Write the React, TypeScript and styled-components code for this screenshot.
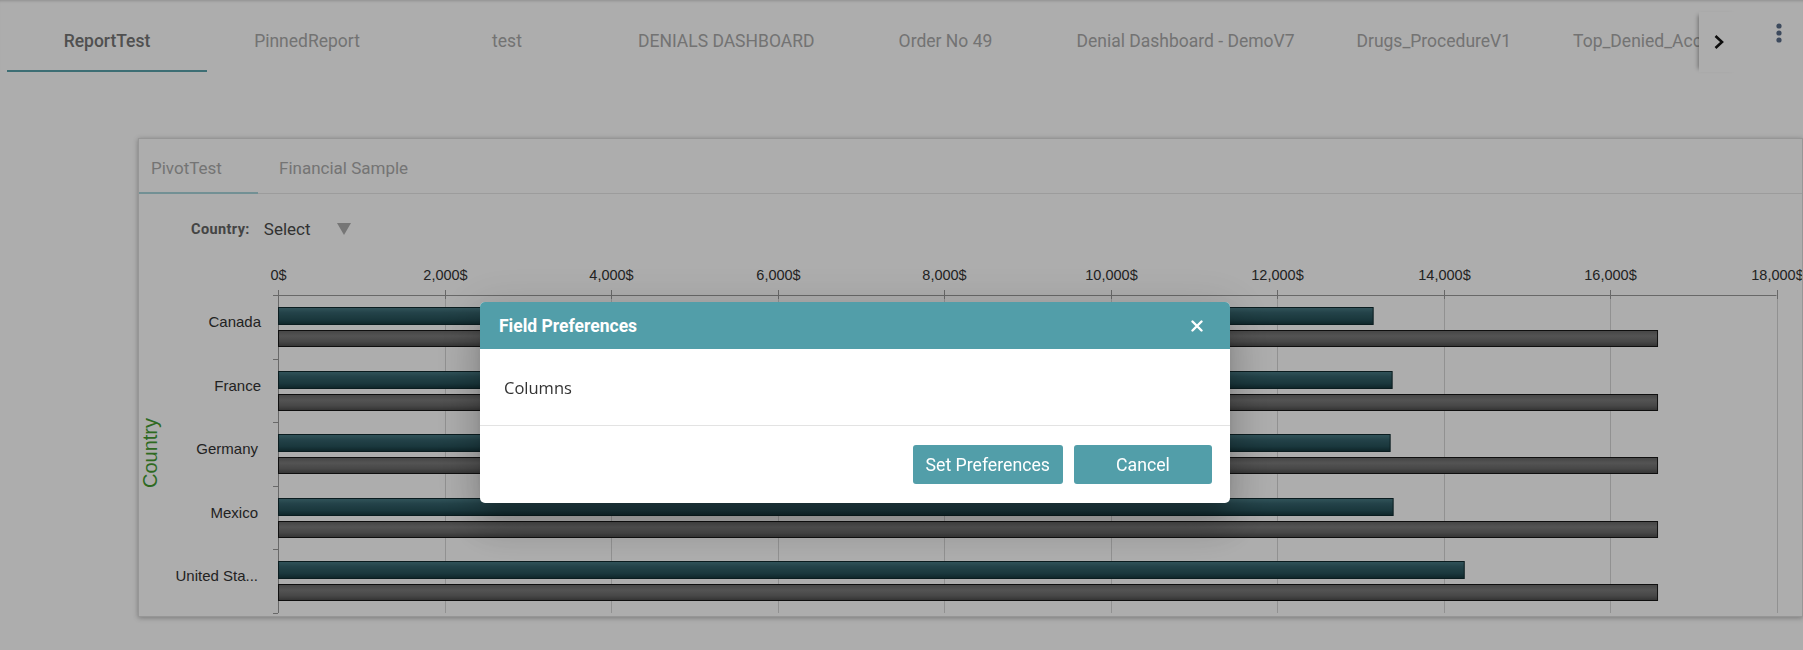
import React from "react";
import styled, { createGlobalStyle } from "styled-components";

const GlobalStyle = createGlobalStyle`
  html, body { margin: 0; padding: 0; background: #ffffff; overflow: hidden; }
  body { font-family: Roboto, "Noto Sans", Arial, sans-serif; }
  * { box-sizing: border-box; }
`;

const Page = styled.div`
  position: relative;
  width: 1803px;
  height: 650px;
  overflow: hidden;
  background: #ffffff;
`;

const Header = styled.header`
  display: flex;
  height: 72px;
  padding-left: 7px;
  box-shadow: inset 0 3px 3px -2px rgba(0, 0, 0, 0.18);
`;

const TabScroller = styled.nav`
  flex: none;
  display: flex;
  width: 1692px;
  height: 60px;
  margin-top: 12px;
  overflow: hidden;
`;

const TopTab = styled.div<{ $active?: boolean }>`
  flex: none;
  min-width: 200px;
  height: 60px;
  padding: 0 31px;
  display: flex;
  align-items: center;
  justify-content: center;
  white-space: nowrap;
  font-size: 17.5px;
  font-weight: ${(p) => (p.$active ? 500 : 400)};
  color: ${(p) => (p.$active ? "#767676" : "#aaaaaa")};
  border-bottom: 2px solid ${(p) => (p.$active ? "#5aa2ab" : "transparent")};
`;

const Paginator = styled.div`
  flex: none;
  width: 40px;
  height: 60px;
  margin-top: 12px;
  display: flex;
  align-items: center;
  justify-content: center;
  box-shadow: -4px 0 4px -3px rgba(0, 0, 0, 0.35);
`;

const Kebab = styled.div`
  flex: none;
  width: 40px;
  height: 40px;
  margin: 13px 0 0 20px;
  display: flex;
  align-items: center;
  justify-content: center;
`;

const Panel = styled.section`
  margin: 66px 0 0 138px;
  width: 1665px;
  height: 479px;
  background: #ffffff;
  border: 1px solid #dedede;
  box-shadow: 0 1px 5px rgba(0, 0, 0, 0.3);
`;

const PanelTabs = styled.div`
  display: flex;
  height: 55px;
  border-bottom: 1px solid #e6e6e6;
`;

const PanelTab = styled.div<{ $active?: boolean; $width?: number; $padLeft: number }>`
  display: flex;
  align-items: center;
  width: ${(p) => (p.$width ? `${p.$width}px` : "auto")};
  padding: 4px 20px 0 ${(p) => p.$padLeft}px;
  font-size: 17px;
  color: #acacac;
  border-bottom: 2px solid ${(p) => (p.$active ? "#a9d4da" : "transparent")};
  margin-bottom: -1px;
`;

const FilterRow = styled.div`
  display: flex;
  align-items: center;
  height: 56px;
  padding: 14px 0 0 52px;
`;

const FilterLabel = styled.span`
  font-size: 14.5px;
  font-weight: 700;
  letter-spacing: 0.4px;
  color: #656565;
`;

const FilterValue = styled.span`
  margin-left: 14px;
  font-size: 17px;
  color: #4b4b4b;
`;

const Caret = styled.span`
  margin-left: 26px;
  display: flex;
  align-items: center;
`;

const ChartSvg = styled.svg`
  display: block;
`;

const Backdrop = styled.div`
  position: fixed;
  inset: 0;
  background: rgba(0, 0, 0, 0.32);
`;

const Dialog = styled.div`
  position: fixed;
  left: 480px;
  top: 302px;
  width: 750px;
  background: #ffffff;
  border-radius: 5px;
  overflow: hidden;
  box-shadow: 0 11px 15px -7px rgba(0, 0, 0, 0.2), 0 24px 38px 3px rgba(0, 0, 0, 0.14),
    0 9px 46px 8px rgba(0, 0, 0, 0.12);
`;

const DialogHeader = styled.div`
  display: flex;
  align-items: center;
  justify-content: space-between;
  height: 47px;
  padding: 0 27px 0 19px;
  background: #529ea9;
`;

const DialogTitle = styled.h2`
  margin: 0;
  font-size: 17.5px;
  font-weight: 700;
  color: #ffffff;
`;

const DialogBody = styled.div`
  display: flex;
  align-items: center;
  height: 77px;
  padding-left: 24px;
  border-bottom: 1px solid #e3e3e3;
  font-family: "Open Sans", Roboto, sans-serif;
  font-size: 16.5px;
  color: #333333;
`;

const DialogFooter = styled.div`
  display: flex;
  justify-content: flex-end;
  gap: 11px;
  padding: 19px 18px 19px;
`;

const DialogButton = styled.button`
  height: 39px;
  min-width: 138px;
  padding: 0 13px;
  border: none;
  border-radius: 3px;
  background: #529ea9;
  color: #ffffff;
  font-family: Roboto, sans-serif;
  font-size: 17.7px;
`;

const topTabs = [
  "ReportTest",
  "PinnedReport",
  "test",
  "DENIALS DASHBOARD",
  "Order No 49",
  "Denial Dashboard - DemoV7",
  "Drugs_ProcedureV1",
  "Top_Denied_Accounts",
];

const data = [
  { name: "Canada", a: 13149, b: 16565, end: 122 },
  { name: "France", a: 13377, b: 16565, end: 122 },
  { name: "Germany", a: 13353, b: 16565, end: 119 },
  { name: "Mexico", a: 13389, b: 16565, end: 119 },
  { name: "United Sta...", a: 14243, b: 16565, end: 119 },
];

const X0 = 139;
const SCALE = 166.5 / 2000;
const AXIS_Y = 45;
const BAND = 63.6;
const BOTTOM = AXIS_Y + BAND * 5;

function Chart() {
  const ticks = Array.from({ length: 10 }, (_, i) => i * 2000);
  return (
    <ChartSvg width={1663} height={366} viewBox="0 0 1663 366">
      <defs>
        <linearGradient id="tealBar" x1="0" y1="0" x2="0" y2="1">
          <stop offset="0" stopColor="#4a7c86" />
          <stop offset="0.3" stopColor="#35636c" />
          <stop offset="0.7" stopColor="#27525a" />
          <stop offset="1" stopColor="#15363c" />
        </linearGradient>
        <linearGradient id="grayBar" x1="0" y1="0" x2="0" y2="1">
          <stop offset="0" stopColor="#666666" />
          <stop offset="0.35" stopColor="#7c7c7c" />
          <stop offset="0.7" stopColor="#6a6a6a" />
          <stop offset="1" stopColor="#4c4c4c" />
        </linearGradient>
      </defs>
      {ticks.map((t) => {
        const x = Math.round(X0 + t * SCALE) + 0.5;
        return (
          <g key={t}>
            {t > 0 && <line x1={x} x2={x} y1={AXIS_Y} y2={BOTTOM} stroke="#d6d6d6" strokeWidth={1} />}
            <line x1={x} x2={x} y1={AXIS_Y - 5} y2={AXIS_Y + 4} stroke="#9a9a9a" strokeWidth={1} />
            <text
              x={x}
              y={30}
              textAnchor="middle"
              fontFamily='"Liberation Sans", Arial, sans-serif'
              fontSize={14.5}
              fill="#333333"
            >
              {t.toLocaleString("en-US")}$
            </text>
          </g>
        );
      })}
      <line x1={X0} x2={X0 + 18000 * SCALE} y1={AXIS_Y + 0.5} y2={AXIS_Y + 0.5} stroke="#9a9a9a" strokeWidth={1} />
      <line x1={X0 + 0.5} x2={X0 + 0.5} y1={AXIS_Y} y2={BOTTOM} stroke="#9a9a9a" strokeWidth={1} />
      {Array.from({ length: 6 }, (_, i) => {
        const y = Math.round(AXIS_Y + i * BAND) + 0.5;
        return <line key={i} x1={X0 - 5} x2={X0} y1={y} y2={y} stroke="#9a9a9a" strokeWidth={1} />;
      })}
      {data.map((d, i) => {
        const top = Math.round(AXIS_Y + i * BAND);
        return (
          <g key={d.name}>
            <rect
              x={X0 + 0.5}
              y={top + 12.5}
              width={d.a * SCALE}
              height={17}
              fill="url(#tealBar)"
              stroke="#102a2e"
              strokeWidth={1}
            />
            <rect
              x={X0 + 0.5}
              y={top + 35.5}
              width={d.b * SCALE}
              height={16}
              fill="url(#grayBar)"
              stroke="#171717"
              strokeWidth={1}
            />
            <text
              x={d.end}
              y={top + 32}
              textAnchor="end"
              fontFamily='"Liberation Sans", Arial, sans-serif'
              fontSize={15}
              fill="#333333"
            >
              {d.name}
            </text>
          </g>
        );
      })}
      <text
        x={18}
        y={203}
        transform="rotate(-90 18 203)"
        textAnchor="middle"
        fontFamily='"Liberation Sans", Arial, sans-serif'
        fontSize={20}
        fill="#449c32"
      >
        Country
      </text>
    </ChartSvg>
  );
}

export default function App() {
  return (
    <Page>
      <GlobalStyle />
      <Header>
        <TabScroller>
          {topTabs.map((t, i) => (
            <TopTab key={t} $active={i === 0}>
              {t}
            </TopTab>
          ))}
        </TabScroller>
        <Paginator>
          <svg width="14" height="16" viewBox="0 0 14 16">
            <path d="M3.5 2 L10 8 L3.5 14" fill="none" stroke="#161616" strokeWidth="2.6" />
          </svg>
        </Paginator>
        <Kebab>
          <svg width="8" height="24" viewBox="0 0 8 24">
            <circle cx="4" cy="5" r="2.6" fill="#5a6d8a" />
            <circle cx="4" cy="12" r="2.6" fill="#5a6d8a" />
            <circle cx="4" cy="19" r="2.6" fill="#5a6d8a" />
          </svg>
        </Kebab>
      </Header>
      <Panel>
        <PanelTabs>
          <PanelTab $active $width={119} $padLeft={12}>
            PivotTest
          </PanelTab>
          <PanelTab $padLeft={21}>Financial Sample</PanelTab>
        </PanelTabs>
        <FilterRow>
          <FilterLabel>Country:</FilterLabel>
          <FilterValue>Select</FilterValue>
          <Caret>
            <svg width="14" height="12" viewBox="0 0 14 12">
              <polygon points="0,0 14,0 7,12" fill="#aeaeae" />
            </svg>
          </Caret>
        </FilterRow>
        <Chart />
      </Panel>
      <Backdrop />
      <Dialog>
        <DialogHeader>
          <DialogTitle>Field Preferences</DialogTitle>
          <svg width="12" height="12" viewBox="0 0 12 12">
            <path d="M1.5 1.5 L10.5 10.5 M10.5 1.5 L1.5 10.5" stroke="#ffffff" strokeWidth="2.4" strokeLinecap="round" />
          </svg>
        </DialogHeader>
        <DialogBody>Columns</DialogBody>
        <DialogFooter>
          <DialogButton>Set Preferences</DialogButton>
          <DialogButton>Cancel</DialogButton>
        </DialogFooter>
      </Dialog>
    </Page>
  );
}
